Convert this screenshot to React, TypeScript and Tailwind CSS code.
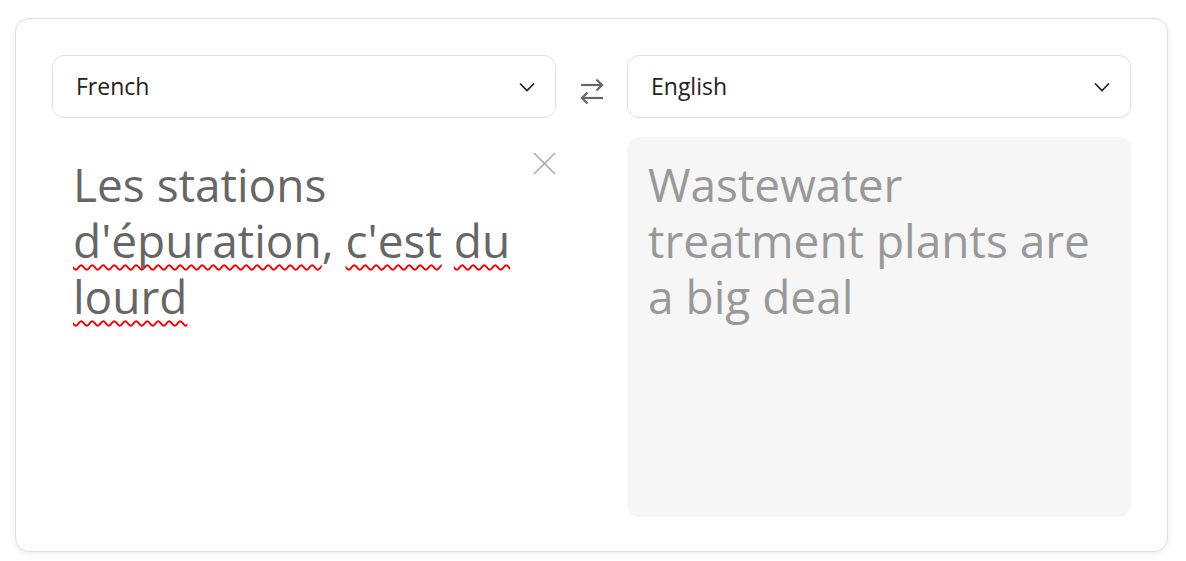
import { useState } from 'react';

const FONT = '"Open Sans", "Noto Sans", sans-serif';

function Chevron() {
  return (
    <svg width="16" height="10" viewBox="0 0 16 10" fill="none" className="shrink-0">
      <polyline points="1,1.5 8,8.5 15,1.5" stroke="#222" strokeWidth="1.7" />
    </svg>
  );
}

function LanguageSelect({ value }: { value: string }) {
  return (
    <button className="flex h-[63px] w-full items-center justify-between rounded-[12px] border border-[#e0e0e0] bg-white pl-[23px] pr-[20px] text-[23px] text-[#222]">
      <span>{value}</span>
      <Chevron />
    </button>
  );
}

function SwapIcon() {
  return (
    <svg width="24" height="26" viewBox="0 0 24 26" fill="none">
      <g stroke="#666" strokeWidth="2.2">
        <line x1="1" y1="7" x2="22" y2="7" />
        <polyline points="16.5,1.5 22,7 16.5,12.5" />
        <line x1="2" y1="20" x2="23" y2="20" />
        <polyline points="7.5,14.5 2,20 7.5,25.5" />
      </g>
    </svg>
  );
}

function Misspelt({ children }: { children: string }) {
  return (
    <span className="underline decoration-wavy decoration-[#f00000] decoration-[1.5px] underline-offset-[6px] [text-decoration-skip-ink:none]">
      {children}
    </span>
  );
}

export default function App() {
  const [source] = useState('French');
  const [target] = useState('English');

  return (
    <div className="min-h-[561px] bg-white pl-[15px] pr-[18px] pt-[18px]" style={{ fontFamily: FONT }}>
      <div className="rounded-[14px] border border-[#e0e0e0] bg-white px-[36px] pb-[34px] pt-[36px] shadow-[0_2px_6px_rgba(0,0,0,0.07)]">
        <div className="grid grid-cols-[504px_71px_1fr]">
          <LanguageSelect value={source} />
          <div className="flex justify-center pt-[23px]">
            <SwapIcon />
          </div>
          <LanguageSelect value={target} />
        </div>

        <div className="mt-[19px] grid grid-cols-[504px_71px_1fr]">
          <div className="relative h-[380px]">
            <div className="pl-[21px] pr-[19px] pt-[19px] text-[46px] leading-[56px] text-[#666]">
              Les stations <Misspelt>d'épuration</Misspelt>, <Misspelt>c'est</Misspelt>{' '}
              <Misspelt>du</Misspelt> <Misspelt>lourd</Misspelt>
            </div>
            <button className="absolute right-0 top-[15px] h-[23px] w-[23px]">
              <svg width="23" height="23" viewBox="0 0 23 23" fill="none">
                <g stroke="#a8a8a8" strokeWidth="1.6">
                  <line x1="1" y1="1" x2="22" y2="22" />
                  <line x1="22" y1="1" x2="1" y2="22" />
                </g>
              </svg>
            </button>
          </div>
          <div />
          <div className="h-[380px] rounded-[12px] bg-[#f6f6f6] pl-[21px] pr-[19px] pt-[19px] text-[46px] leading-[56px] text-[#999]">
            Wastewater treatment plants are a big deal
          </div>
        </div>
      </div>
    </div>
  );
}
